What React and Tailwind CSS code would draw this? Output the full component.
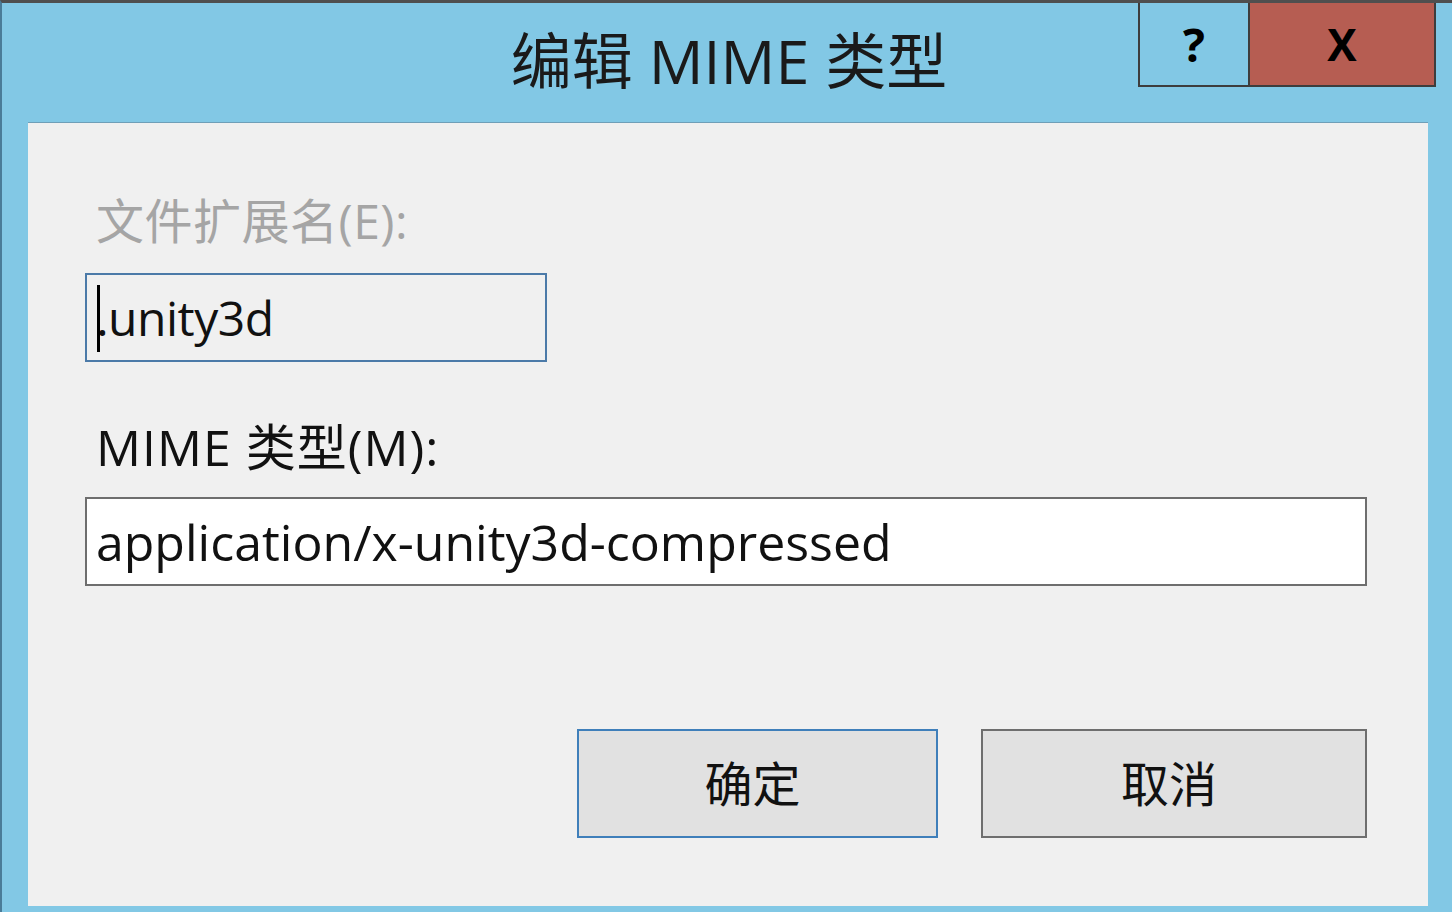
import React from "react";

const font = { fontFamily: '"Open Sans", "Noto Sans CJK SC", sans-serif' };

export default function App() {
  return (
    <div
      className="w-[1452px] h-[912px] bg-[#82c8e5] border-t-[3px] border-l-2 border-t-[#4f4f4f] border-l-[#4a7c98] flex flex-col overflow-hidden"
      style={font}
    >
      {/* Title bar */}
      <div className="relative h-[119px] shrink-0 flex justify-center">
        <div className="pt-[18px] text-[61px] leading-[80px] text-[#1a1a1a] pl-[4px]">编辑 MIME 类型</div>
        <div className="absolute top-0 right-[16px] flex h-[84px] border-2 border-t-0 border-[#3d3d3d]">
          <div className="w-[110px] h-full flex items-center justify-center border-r-2 border-[#3d3d3d] bg-[#82c8e5] text-[46px] font-bold text-black leading-none">
            ?
          </div>
          <div className="w-[184px] h-full flex items-center justify-center bg-[#b65d52] text-[44px] font-bold text-black leading-none">
            X
          </div>
        </div>
      </div>

      {/* Body */}
      <div className="ml-[26px] mr-[24px] h-[784px] shrink-0 bg-[#f0f0f0] border-t border-[#6f9fb8] flex flex-col">
        <div className="ml-[68px] mt-[74px] text-[48px] leading-[48px] tracking-[0.5px] text-[#a5a5a5]">文件扩展名(E):</div>
        <div className="ml-[57px] mt-[28px] w-[462px] h-[89px] border-2 border-[#4b7aa8] bg-[#f0f0f0] flex items-center pl-[9px] relative">
          <span className="text-[48px] leading-none text-[#111] tracking-[-0.5px]">.unity3d</span>
          <span className="absolute left-[10px] top-[10px] w-[3px] h-[67px] bg-black"></span>
        </div>
        <div className="ml-[68px] mt-[61px] text-[50px] leading-[48px] tracking-[1px] text-[#111]">MIME 类型(M):</div>
        <div className="ml-[57px] mt-[26px] w-[1282px] h-[89px] border-2 border-[#6e6e6e] bg-white flex items-center pl-[9px]">
          <span className="text-[50px] leading-none text-[#111]">application/x-unity3d-compressed</span>
        </div>
        <div className="ml-[549px] mt-[143px] flex gap-[43px]">
          <div className="w-[361px] h-[109px] border-2 border-[#3f7fba] bg-[#e1e1e1] flex items-center justify-center pr-[10px] text-[48px] text-[#111]">
            确定
          </div>
          <div className="w-[386px] h-[109px] border-2 border-[#6e6e6e] bg-[#e1e1e1] flex items-center justify-center pr-[10px] text-[48px] text-[#111]">
            取消
          </div>
        </div>
      </div>
    </div>
  );
}
